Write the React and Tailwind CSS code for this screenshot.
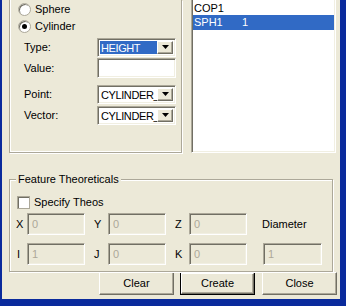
const raised =
  "bg-[#ECE9D8] border border-t-white border-l-white border-b-[#716F64] border-r-[#716F64] shadow-[inset_-1px_-1px_0_#ACA899]";
const sunken =
  "border border-t-[#ACA899] border-l-[#ACA899] border-b-white border-r-white shadow-[inset_1px_1px_0_#716F64,inset_-1px_-1px_0_#F1EFE2]";

function Arrow() {
  return (
    <div className={`w-[16px] h-full flex items-center justify-center ${raised}`}>
      <svg width="7" height="4" viewBox="0 0 7 4">
        <path d="M0 0h7L3.5 4z" fill="#000" />
      </svg>
    </div>
  );
}

function Combo({ text, selected }) {
  return (
    <div className={`w-[79px] h-[19px] bg-white flex p-[2px] ${sunken}`}>
      <div
        className={`flex-1 overflow-hidden whitespace-nowrap leading-[15px] pl-[1px] tracking-[-0.4px] ${selected ? "bg-[#316AC5] text-white" : ""}`}
      >
        {text}
      </div>
      <Arrow />
    </div>
  );
}

function Radio({ checked, label }) {
  return (
    <div className="flex items-center h-[17px]">
      <div className="w-[13px] h-[13px] rounded-full bg-white border border-[#ACA899] shadow-[inset_1px_1px_0_#716F64] flex items-center justify-center">
        {checked && <div className="w-[5px] h-[5px] rounded-full bg-black" />}
      </div>
      <span className="ml-[4px]">{label}</span>
    </div>
  );
}

function DisEdit({ value, w = "w-[58px]" }) {
  return (
    <div className={`${w} h-[22px] bg-[#ECE9D8] text-[#ACA899] pl-[4px] leading-[20px] ${sunken}`}>
      {value}
    </div>
  );
}

export default function App() {
  return (
    <div
      className="w-[346px] h-[306px] overflow-hidden bg-[#ECE9D8] border-l-2 border-r-[6px] border-b-[7px] border-[#0A2A9C] text-[11px] text-black"
      style={{ fontFamily: '"Liberation Sans", Arial, sans-serif' }}
    >
      <div className="flex h-[153px]">
        {/* Left group */}
        <div className="ml-[7px] w-[173px] h-[153px] border-l border-r border-b border-[#ACA899] shadow-[1px_1px_0_#fff,inset_1px_0_0_#fff,inset_0_-1px_0_#fff] pl-[8px] pt-[1px]">
          <Radio label="Sphere" />
          <Radio checked label="Cylinder" />
          <div className="flex flex-col mt-[3px]">
            <div className="flex items-center h-[18px]">
              <span className="w-[73px] ml-[6px]">Type:</span>
              <Combo text="HEIGHT" selected />
            </div>
            <div className="flex items-center h-[20px] mt-[2px]">
              <span className="w-[73px] ml-[6px]">Value:</span>
              <div className={`w-[79px] h-[20px] bg-white ${sunken}`} />
            </div>
            <div className="flex items-center h-[18px] mt-[7px]">
              <span className="w-[73px] ml-[6px]">Point:</span>
              <Combo text="CYLINDER_SOURCE" />
            </div>
            <div className="flex items-center h-[18px] mt-[3px]">
              <span className="w-[73px] ml-[6px]">Vector:</span>
              <Combo text="CYLINDER_VECTOR" />
            </div>
          </div>
        </div>

        {/* List */}
        <div className="ml-[9px] w-[145px] h-[153px] bg-white border-l border-b border-r border-l-[#ACA899] border-b-white border-r-white shadow-[inset_1px_0_0_#716F64,inset_-1px_-1px_0_#F1EFE2] pl-[1px] pr-[1px]">
          <div className="h-[14px] leading-[14px] pl-[1px] mt-[1px]">COP1</div>
          <div className="h-[15px] leading-[15px] pl-[1px] bg-[#316AC5] text-white flex">
            <span className="w-[48px]">SPH1</span>
            <span>1</span>
          </div>
        </div>
      </div>

      {/* Feature Theoreticals */}
      <div className="relative ml-[7px] mt-[26px] w-[324px] h-[93px] border border-[#ACA899] shadow-[1px_1px_0_#fff,inset_1px_1px_0_#fff]">
        <span className="absolute -top-[8px] left-[6px] px-[2px] bg-[#ECE9D8] leading-[14px]">
          Feature Theoreticals
        </span>
        <div className="flex items-center mt-[15px] ml-[7px] h-[14px]">
          <div className="w-[13px] h-[13px] bg-white border border-[#ACA899] shadow-[inset_1px_1px_0_#716F64]" />
          <span className="ml-[4px]">Specify Theos</span>
        </div>
        <div className="flex items-center mt-[4px] h-[22px]">
          <span className="w-[17px] pl-[6px]">X</span>
          <DisEdit value="0" />
          <span className="w-[23px] pl-[9px]">Y</span>
          <DisEdit value="0" />
          <span className="w-[23px] pl-[9px]">Z</span>
          <DisEdit value="0" />
          <span className="ml-[15px]">Diameter</span>
        </div>
        <div className="flex items-center mt-[8px] h-[22px]">
          <span className="w-[17px] pl-[7px]">I</span>
          <DisEdit value="1" />
          <span className="w-[23px] pl-[9px]">J</span>
          <DisEdit value="0" />
          <span className="w-[23px] pl-[9px]">K</span>
          <DisEdit value="0" />
          <div className="ml-[16px]">
            <DisEdit value="1" w="w-[59px]" />
          </div>
        </div>
      </div>

      {/* Buttons */}
      <div className="flex ml-[97px] gap-[6px]">
        <button className={`w-[75px] h-[23px] ${raised}`}>Clear</button>
        <div className="w-[75px] h-[23px] border border-black">
          <button className={`w-full h-full ${raised}`}>Create</button>
        </div>
        <button className={`ml-[1px] w-[75px] h-[23px] ${raised}`}>Close</button>
      </div>
    </div>
  );
}
